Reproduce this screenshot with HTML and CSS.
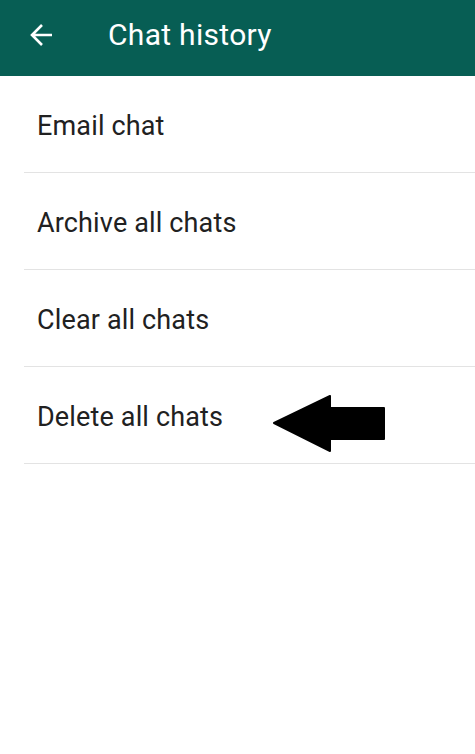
FILE: index.html
```html
<!DOCTYPE html>
<html lang="en">
<head>
    <meta charset="UTF-8">
    <meta name="viewport" content="width=device-width, initial-scale=1.0">
    <title>Chat history</title>
    <link rel="stylesheet" href="styles.css">
</head>
<body>
    <header class="toolbar">
        <svg class="back" width="24" height="24" viewBox="0 0 24 24">
            <path d="M22 12H3M12 2L2 12l10 10" fill="none" stroke="#fff" stroke-width="2.6"/>
        </svg>
        <h1>Chat history</h1>
    </header>
    <ul class="menu">
        <li>Email chat</li>
        <li>Archive all chats</li>
        <li>Clear all chats</li>
        <li class="marked">
            Delete all chats
            <svg class="pointer" width="114" height="58" viewBox="0 0 114 58">
                <path d="M2 28L58 1V13H112V44H58V56Z" fill="#000" stroke="#000" stroke-width="2" stroke-linejoin="round"/>
            </svg>
        </li>
    </ul>
</body>
</html>
```

FILE: styles.css
```css
body {
    margin: 0;
    font-family: Roboto, "Noto Sans", sans-serif;
    background: #fff;
}
.toolbar {
    height: 76px;
    background-color: #075e54;
    display: flex;
    align-items: center;
    padding-left: 30px;
}
.back {
    display: block;
    margin-top: -6px;
}
.toolbar h1 {
    margin: -8px 0 0 54px;
    color: #fff;
    font-size: 30px;
    letter-spacing: 0.3px;
    font-weight: 400;
}
.menu {
    list-style: none;
    margin: 0;
    padding: 0 0 0 24px;
}
.menu li {
    border-bottom: 1px solid #e3e3e3;
    display: flex;
    align-items: center;
    padding: 4px 0 0 13px;
    box-sizing: border-box;
    height: 97px;
    font-size: 27px;
    letter-spacing: 0.15px;
    color: #212121;
}
.marked {
    position: relative;
}
.pointer {
    position: absolute;
    left: 248px;
    top: 28px;
}
```
